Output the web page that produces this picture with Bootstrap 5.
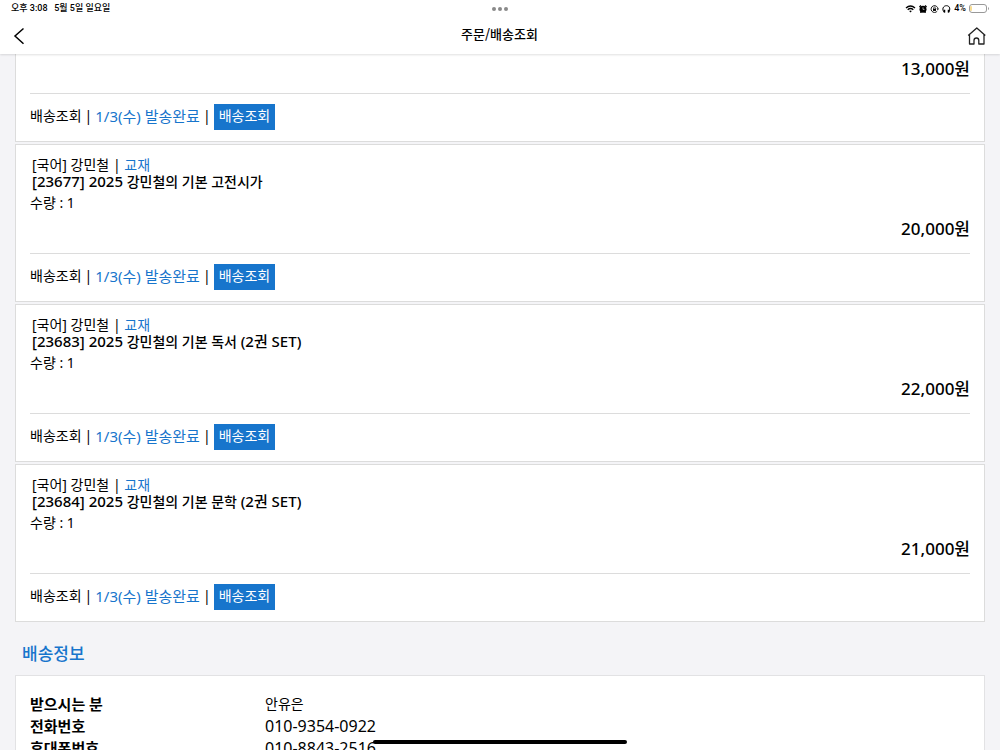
<!DOCTYPE html>
<html lang="ko">
<head>
<meta charset="utf-8">
<meta name="viewport" content="width=device-width, initial-scale=1">
<title>주문/배송조회</title>
<link href="https://cdn.jsdelivr.net/npm/bootstrap@5.3.0/dist/css/bootstrap.min.css" rel="stylesheet">
<style>
  body { font: 14px/17px "Noto Sans", "Noto Sans CJK KR", sans-serif; color: #000; background: #f4f4f7; }
  a { color: #1775cc; text-decoration: none; }
  main { padding: 0 15px; }
  .app-header { box-shadow: 0 1px 2px rgba(0,0,0,.12); z-index: 2; }
  .status-bar { height: 17px; padding: 0 11px; font: 9px/17px Roboto, "Noto Sans CJK KR", sans-serif; font-weight: 500; }
  .status-bar > div { flex: 1; }
  .status-icons { gap: 3px; }
  .title-bar { height: 37px; padding: 0 14px 0 13px; }
  .title-bar h1 { font: 500 13px/34px "Noto Sans CJK KR", sans-serif; padding-bottom: 3px; }
  .title-bar button { line-height: 0; }
  .order-list { gap: 2px; }
  .order { background: #fff; border: 1px solid #dcdcdc; padding: 11px 14px 0; }
  .order-cut { border-top: 0; padding-top: 2px; }
  .order-name { font-weight: 500; height: 17px; }
  .latin { font-size: 15px; }
  .order-head { padding-left: 2px; }
  .qty { line-height: 26px; height: 26px; }
  .price { font-size: 17px; line-height: 26px; height: 26px; font-weight: 500; margin-bottom: 11px; }
  .track { border-top: 1px solid #dcdcdc; padding: 10px 0 11px; line-height: 24px; gap: 3px; }
  .track > * { padding-bottom: 2px; }
  .track a { font-size: 15px; }
  .btn-track { font-size: 14px; line-height: 24px; padding: 0 5px 2px; border: 0; border-radius: 0; background: #1775cc; color: #fff; }
  .section-title { font-size: 17px; line-height: 24px; font-weight: 500; color: #1775cc; padding: 20px 7px 9px; }
  .ship { background: #fff; border: 1px solid #e2e2e4; padding: 17px 14px; }
  .ship table { line-height: 22px; }
  .ship th, .ship td { padding: 0; height: 22px; }
  .ship th { width: 25%; font-size: 15px; font-weight: 700; }
  .ship .phone { font-size: 16px; }
  .home-bar { bottom: 6px; width: 254px; height: 4px; background: #000; z-index: 3; }
</style>
</head>
<body class="vh-100 overflow-hidden d-flex flex-column">
<header class="app-header bg-white position-relative flex-shrink-0">
  <div class="status-bar d-flex align-items-center">
    <div>오후 3:08 &nbsp; 5월 5일 일요일</div>
    <svg width="16" height="4" viewBox="0 0 16 4" fill="#8a8a8a"><circle cx="2" cy="2" r="2"/><circle cx="8" cy="2" r="2"/><circle cx="14" cy="2" r="2"/></svg>
    <div class="status-icons d-flex justify-content-end align-items-center">
      <svg width="11" height="8" viewBox="0 0 10 8" fill="none" stroke="#000" stroke-width="1.4"><path d="M.5 3Q5-1 9.500 3M2.200 4.800Q5 2.400 7.800 4.800"/><path d="M3.700 6.100Q5 5.100 6.300 6.100L5 7.600Z" fill="#000" stroke="none"/></svg>
      <svg width="8" height="8" viewBox="0 0 8 8"><path d="M.4 2 2 .5M7.600 2 6 .5M1.400 7.700l1-1M6.600 7.700l-1-1" stroke="#000" stroke-width="1.300"/><circle cx="4" cy="4.200" r="3.500"/><path d="M4 2.300v2.100h1.500" fill="none" stroke="#fff" stroke-width=".6"/></svg>
      <svg width="9" height="8" viewBox="0 0 8 8" fill="none" stroke="#000"><path d="M6.800 6A3.400 3.400 0 1 1 7.400 4" stroke-width=".9"/><path d="m6.300 3.700 1.100 1.200.6-1.400" stroke-width=".7"/><rect x="2.500" y="3.700" width="3" height="2.200" fill="#000" stroke="none"/><path d="M3.100 4V3a.9.9 0 0 1 1.800 0v1" stroke-width=".6"/></svg>
      <svg width="9" height="8" viewBox="0 0 9 8" fill="none" stroke="#000"><path d="M2.300 7.400C-.4 4.500 1 .7 4.500.7S8.600 4.500 6.700 7.400" stroke-width="1"/><path d="M2.500 4.700v2.800M6.500 4.700v2.800" stroke-width="1.500"/></svg>
      <span>4%</span>
      <svg width="20" height="9" viewBox="0 0 20 9"><rect x=".5" y=".5" width="17" height="8" rx="2.500" fill="#fff" stroke="#999"/><path d="M2 2.200v4.600" stroke="#f3c64a" stroke-width="1.200"/><path d="M19 3v3q1-.5 1-1.500T19 3" fill="#999"/></svg>
    </div>
  </div>
  <div class="title-bar d-flex align-items-center justify-content-between">
    <button type="button" class="btn p-0 border-0" aria-label="뒤로"><svg width="22" height="18" viewBox="0 0 22 18" fill="none" stroke="#000" stroke-width="1.500"><path d="M10.500 1.500 2 9l8.500 7.700"/></svg></button>
    <h1 class="m-0">주문/배송조회</h1>
    <button type="button" class="btn p-0 border-0" aria-label="홈"><svg width="22" height="18" viewBox="0 0 22 18" fill="none" stroke="#222" stroke-width="1.300" stroke-linejoin="round"><path d="M5.500 7.800V17H10v-3.600a2.400 2.400 0 0 1 4.800 0V17h5.200V7.800M4.200 8.600 12.800.9l8.500 7.700"/></svg></button>
  </div>
</header>
<main class="flex-grow-1 overflow-hidden">
  <div class="order-list d-flex flex-column">
    <article class="order order-cut">
      <div class="price text-end">13,000원</div>
      <div class="track d-flex align-items-center"><span>배송조회</span><span>|</span><a href="#">1/3(수) 발송완료</a><span>|</span><button type="button" class="btn btn-track">배송조회</button></div>
    </article>
    <article class="order">
      <div class="order-head"><div>[국어] 강민철 | <a href="#">교재</a></div><div class="order-name"><span class="latin">[23677] 2025</span> 강민철의 기본 고전시가</div></div>
      <div class="qty">수량 : 1</div>
      <div class="price text-end">20,000원</div>
      <div class="track d-flex align-items-center"><span>배송조회</span><span>|</span><a href="#">1/3(수) 발송완료</a><span>|</span><button type="button" class="btn btn-track">배송조회</button></div>
    </article>
    <article class="order">
      <div class="order-head"><div>[국어] 강민철 | <a href="#">교재</a></div><div class="order-name"><span class="latin">[23683] 2025</span> 강민철의 기본 독서 <span class="latin">(2권 SET)</span></div></div>
      <div class="qty">수량 : 1</div>
      <div class="price text-end">22,000원</div>
      <div class="track d-flex align-items-center"><span>배송조회</span><span>|</span><a href="#">1/3(수) 발송완료</a><span>|</span><button type="button" class="btn btn-track">배송조회</button></div>
    </article>
    <article class="order">
      <div class="order-head"><div>[국어] 강민철 | <a href="#">교재</a></div><div class="order-name"><span class="latin">[23684] 2025</span> 강민철의 기본 문학 <span class="latin">(2권 SET)</span></div></div>
      <div class="qty">수량 : 1</div>
      <div class="price text-end">21,000원</div>
      <div class="track d-flex align-items-center"><span>배송조회</span><span>|</span><a href="#">1/3(수) 발송완료</a><span>|</span><button type="button" class="btn btn-track">배송조회</button></div>
    </article>
  </div>
  <h2 class="section-title m-0">배송정보</h2>
  <section class="ship">
    <table class="w-100">
      <tr><th scope="row">받으시는 분</th><td>안유은</td></tr>
      <tr><th scope="row">전화번호</th><td class="phone">010-9354-0922</td></tr>
      <tr><th scope="row">휴대폰번호</th><td class="phone">010-8843-2516</td></tr>
    </table>
  </section>
</main>
<div class="home-bar position-fixed start-50 translate-middle-x rounded-pill"></div>
</body>
</html>
